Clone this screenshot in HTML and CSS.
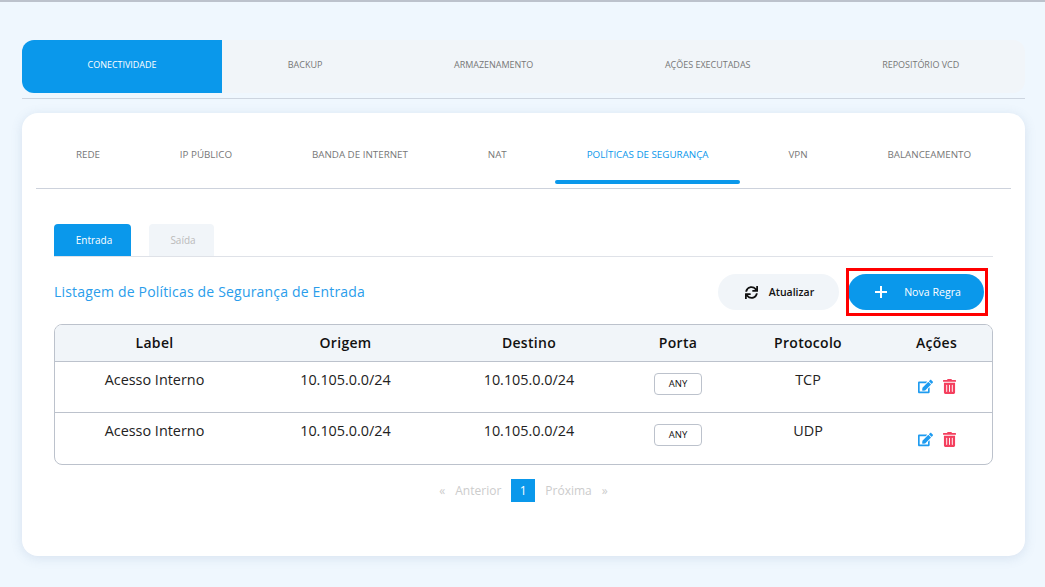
FILE: index.html
```html
<!DOCTYPE html>
<html lang="pt-BR">
<head>
<meta charset="utf-8">
<title>Políticas de Segurança</title>
<link rel="stylesheet" href="styles.css">
</head>
<body>
<main class="page">
  <nav class="main-tabs">
    <a class="main-tab active">CONECTIVIDADE</a>
    <a class="main-tab">BACKUP</a>
    <a class="main-tab">ARMAZENAMENTO</a>
    <a class="main-tab">AÇÕES EXECUTADAS</a>
    <a class="main-tab">REPOSITÓRIO VCD</a>
  </nav>
  <section class="card">
    <nav class="sub-tabs">
      <a class="sub-tab">REDE</a>
      <a class="sub-tab">IP PÚBLICO</a>
      <a class="sub-tab">BANDA DE INTERNET</a>
      <a class="sub-tab">NAT</a>
      <a class="sub-tab active">POLÍTICAS DE SEGURANÇA</a>
      <a class="sub-tab">VPN</a>
      <a class="sub-tab">BALANCEAMENTO</a>
    </nav>
    <div class="content">
      <div class="dir-tabs">
        <a class="dir-tab active">Entrada</a>
        <a class="dir-tab">Saída</a>
      </div>
      <div class="toolbar">
        <h2 class="title">Listagem de Políticas de Segurança de Entrada</h2>
        <div class="actions">
          <button class="btn btn-light">
            <svg class="btn-icon" viewBox="0 0 512 512"><path d="M440.65 12.57l4 82.77A247.16 247.16 0 0 0 255.83 8C134.73 8 33.91 94.92 12.29 209.82A12 12 0 0 0 24.09 224h49.05a12 12 0 0 0 11.67-9.26 175.91 175.91 0 0 1 317-56.94l-101.46-4.86a12 12 0 0 0-12.57 12v47.41a12 12 0 0 0 12 12H500a12 12 0 0 0 12-12V12a12 12 0 0 0-12-12h-47.37a12 12 0 0 0-11.98 12.57zM255.83 432a175.61 175.61 0 0 1-146-77.8l101.8 4.87a12 12 0 0 0 12.57-12v-47.4a12 12 0 0 0-12-12H12a12 12 0 0 0-12 12V500a12 12 0 0 0 12 12h47.35a12 12 0 0 0 12-12.6l-4.15-82.57A247.17 247.17 0 0 0 255.83 504c121.11 0 221.93-86.92 243.55-201.82a12 12 0 0 0-11.8-14.18h-49.05a12 12 0 0 0-11.67 9.26A175.86 175.86 0 0 1 255.83 432z"/></svg>
            Atualizar
          </button>
          <div class="highlight">
            <button class="btn btn-primary">
              <svg class="plus-icon" viewBox="0 0 12 12"><path d="M6 0v12M0 6h12"/></svg>
              Nova Regra
            </button>
          </div>
        </div>
      </div>
      <div class="table-wrap">
        <table class="rules">
          <colgroup>
            <col class="c1"><col class="c2"><col class="c3"><col class="c4"><col class="c5"><col class="c6">
          </colgroup>
          <thead>
            <tr><th>Label</th><th>Origem</th><th>Destino</th><th>Porta</th><th>Protocolo</th><th>Ações</th></tr>
          </thead>
          <tbody>
            <tr>
              <td>Acesso Interno</td><td>10.105.0.0/24</td><td>10.105.0.0/24</td>
              <td><span class="port">ANY</span></td><td>TCP</td>
              <td class="row-actions">
                <svg class="ico ico-edit" viewBox="0 0 576 512"><path d="M402.6 83.2l90.2 90.2c3.8 3.8 3.8 10 0 13.8L274.4 405.6l-92.8 10.3c-12.4 1.4-22.9-9.1-21.5-21.5l10.3-92.8L388.8 83.2c3.8-3.8 10-3.8 13.8 0zm162-22.9l-48.8-48.8c-15.2-15.2-39.9-15.2-55.2 0l-35.4 35.4c-3.8 3.8-3.8 10 0 13.8l90.2 90.2c3.8 3.8 10 3.8 13.8 0l35.4-35.4c15.2-15.3 15.2-40 0-55.2zM384 346.2V448H64V128h229.8c3.2 0 6.2-1.3 8.5-3.5l40-40c7.6-7.6 2.2-20.5-8.5-20.5H48C21.5 64 0 85.5 0 112v352c0 26.5 21.5 48 48 48h352c26.5 0 48-21.5 48-48V306.2c0-10.7-12.9-16-20.5-8.5l-40 40c-2.2 2.3-3.5 5.3-3.5 8.5z"/></svg>
                <svg class="ico ico-trash" viewBox="0 0 448 512"><path d="M32 464a48 48 0 0 0 48 48h288a48 48 0 0 0 48-48V128H32zm272-256a16 16 0 0 1 32 0v224a16 16 0 0 1-32 0zm-96 0a16 16 0 0 1 32 0v224a16 16 0 0 1-32 0zm-96 0a16 16 0 0 1 32 0v224a16 16 0 0 1-32 0zM432 32H312l-9.4-18.7A24 24 0 0 0 281.1 0H166.8a23.72 23.72 0 0 0-21.4 13.3L136 32H16A16 16 0 0 0 0 48v32a16 16 0 0 0 16 16h416a16 16 0 0 0 16-16V48a16 16 0 0 0-16-16z"/></svg>
              </td>
            </tr>
            <tr>
              <td>Acesso Interno</td><td>10.105.0.0/24</td><td>10.105.0.0/24</td>
              <td><span class="port">ANY</span></td><td>UDP</td>
              <td class="row-actions">
                <svg class="ico ico-edit" viewBox="0 0 576 512"><path d="M402.6 83.2l90.2 90.2c3.8 3.8 3.8 10 0 13.8L274.4 405.6l-92.8 10.3c-12.4 1.4-22.9-9.1-21.5-21.5l10.3-92.8L388.8 83.2c3.8-3.8 10-3.8 13.8 0zm162-22.9l-48.8-48.8c-15.2-15.2-39.9-15.2-55.2 0l-35.4 35.4c-3.8 3.8-3.8 10 0 13.8l90.2 90.2c3.8 3.8 10 3.8 13.8 0l35.4-35.4c15.2-15.3 15.2-40 0-55.2zM384 346.2V448H64V128h229.8c3.2 0 6.2-1.3 8.5-3.5l40-40c7.6-7.6 2.2-20.5-8.5-20.5H48C21.5 64 0 85.5 0 112v352c0 26.5 21.5 48 48 48h352c26.5 0 48-21.5 48-48V306.2c0-10.7-12.9-16-20.5-8.5l-40 40c-2.2 2.3-3.5 5.3-3.5 8.5z"/></svg>
                <svg class="ico ico-trash" viewBox="0 0 448 512"><path d="M32 464a48 48 0 0 0 48 48h288a48 48 0 0 0 48-48V128H32zm272-256a16 16 0 0 1 32 0v224a16 16 0 0 1-32 0zm-96 0a16 16 0 0 1 32 0v224a16 16 0 0 1-32 0zm-96 0a16 16 0 0 1 32 0v224a16 16 0 0 1-32 0zM432 32H312l-9.4-18.7A24 24 0 0 0 281.1 0H166.8a23.72 23.72 0 0 0-21.4 13.3L136 32H16A16 16 0 0 0 0 48v32a16 16 0 0 0 16 16h416a16 16 0 0 0 16-16V48a16 16 0 0 0-16-16z"/></svg>
              </td>
            </tr>
          </tbody>
        </table>
      </div>
      <div class="pager">
        <span class="pg-arrow">«</span>
        <span class="pg-text">Anterior</span>
        <span class="pg-current">1</span>
        <span class="pg-text">Próxima</span>
        <span class="pg-arrow">»</span>
      </div>
    </div>
  </section>
</main>
</body>
</html>
```
FILE: styles.css
```css
* { box-sizing: border-box; }
html, body { height: 100%; }
body {
  margin: 0;
  background: #eff7fe;
  font-family: "Open Sans", "Noto Sans", sans-serif;
  color: #111;
  overflow: hidden;
}
.page {
  height: 587px;
  border-top: 2px solid #bcc2cc;
  padding: 38px 20px 0 22px;
}
.main-tabs {
  display: flex;
  height: 53px;
  background: #f1f5f9;
  border-radius: 12px;
  margin-bottom: 5px;
  position: relative;
}
.main-tabs::after {
  content: "";
  position: absolute;
  left: 0; right: 0; bottom: -6px;
  height: 1px;
  background: #cdd5e0;
}
.main-tab {
  flex: 1 1 auto;
  display: flex;
  align-items: center;
  justify-content: center;
  font-size: 9px;
  color: #777;
  padding: 0 10px 4px;
  letter-spacing: -0.02px;
}
.main-tab.active {
  flex: 0 0 200px;
  background: #0a98eb;
  color: #fff;
  border-radius: 12px 0 0 12px;
}
.card {
  margin-top: 20px;
  height: 443px;
  background: #fff;
  border-radius: 16px;
  box-shadow: 0 2px 12px rgba(90, 120, 160, 0.16);
  padding: 0 14px;
}
.sub-tabs {
  display: flex;
  height: 76px;
  border-bottom: 1px solid #cdd2dc;
}
.sub-tab {
  flex: 1 1 auto;
  position: relative;
  display: flex;
  align-items: center;
  justify-content: center;
  padding: 7px 10px 0;
  font-size: 9.8px;
  color: #777;
  height: 76px;
}
.sub-tab.active { color: #0a98eb; }
.sub-tab.active::after {
  content: "";
  position: absolute;
  left: 8px; right: 9px; bottom: 5px;
  height: 4px;
  border-radius: 2px;
  background: #0a98eb;
}
.content { padding: 35px 18px 0; }
.dir-tabs {
  display: flex;
  gap: 18px;
  height: 33px;
  border-bottom: 1px solid #dfe2e8;
}
.dir-tab {
  display: flex;
  align-items: center;
  justify-content: center;
  height: 32px;
  font-size: 10px;
  border-radius: 4px 4px 0 0;
  background: #f1f5f9;
  color: #bbb;
  width: 65px;
  padding-left: 3px;
}
.dir-tab.active { background: #0a98eb; color: #fff; width: 77px; padding-left: 3px; }
.toolbar {
  display: flex;
  align-items: center;
  justify-content: space-between;
  height: 36px;
  margin-top: 17px;
  padding-right: 9px;
}
.title {
  margin: 0;
  padding-bottom: 2px;
  font-size: 14px;
  font-weight: 400;
  color: #2a9deb;
  letter-spacing: 0.18px;
}
.actions { display: flex; gap: 9px; }
.btn {
  display: flex;
  align-items: center;
  justify-content: center;
  height: 36px;
  border: 0;
  border-radius: 18px;
  font-family: inherit;
  font-size: 10.5px;
  padding-bottom: 1px;
}
.btn-light { width: 121px; background: #f1f5f9; color: #111; font-weight: 600; gap: 11px; padding-left: 2px; padding-right: 0; }
.btn-primary { width: 136px; background: #0a98eb; color: #fff; gap: 17px; padding-left: 4px; padding-right: 0; font-size: 10.6px; }
.btn-icon { width: 13px; height: 13px; fill: #111; }
.plus-icon { width: 12px; height: 12px; stroke: #fff; stroke-width: 2; fill: none; }
.highlight { position: relative; }
.highlight::after {
  content: "";
  position: absolute;
  left: -2px; right: -4px; top: -6px; bottom: -6px;
  border: 3px solid #f00;
  pointer-events: none;
}
.table-wrap {
  margin-top: 14px;
  height: 141px;
  border: 1px solid #bcc2cc;
  border-radius: 8px;
  overflow: hidden;
}
.rules {
  width: 100%;
  border-collapse: collapse;
  table-layout: fixed;
}
.c1 { width: 199px; }
.c2 { width: 183px; }
.c3 { width: 184px; }
.c4 { width: 114px; }
.c5 { width: 146px; }
.rules th {
  height: 36px;
  background: #f1f5f9;
  border-bottom: 1px solid #bcc2cc;
  font-size: 14px;
  font-weight: 600;
  letter-spacing: 0.3px;
  text-align: center;
  padding: 0;
}
.rules td {
  height: 51px;
  padding: 8px 0 0;
  vertical-align: top;
  text-align: center;
  font-size: 14.4px;
  line-height: 19px;
  color: #222;
}
.rules tbody tr + tr td { border-top: 1px solid #bcc2cc; }
.port {
  display: inline-block;
  width: 48px;
  height: 22px;
  margin-top: 3px;
  border: 1px solid #bcc2cc;
  border-radius: 4px;
  font-size: 9.5px;
  line-height: 20px;
  color: #111;
}
.rules td.row-actions { padding-top: 17px; padding-left: 1px; line-height: 15px; }
.rules tbody tr + tr td.row-actions { padding-top: 19px; }
.ico { display: inline-block; width: 15px; height: 15px; }
.ico-edit { fill: #1e9bf0; margin-right: 6px; }
.ico-trash { fill: #f43f5e; width: 13px; }
.pager {
  display: flex;
  align-items: center;
  justify-content: center;
  gap: 10px;
  margin-top: 14px;
  height: 23px;
  font-size: 12px;
  color: #ccc;
}
.pg-current {
  width: 24px;
  height: 23px;
  background: #0a98eb;
  color: #fff;
  text-align: center;
  line-height: 23px;
}
```
